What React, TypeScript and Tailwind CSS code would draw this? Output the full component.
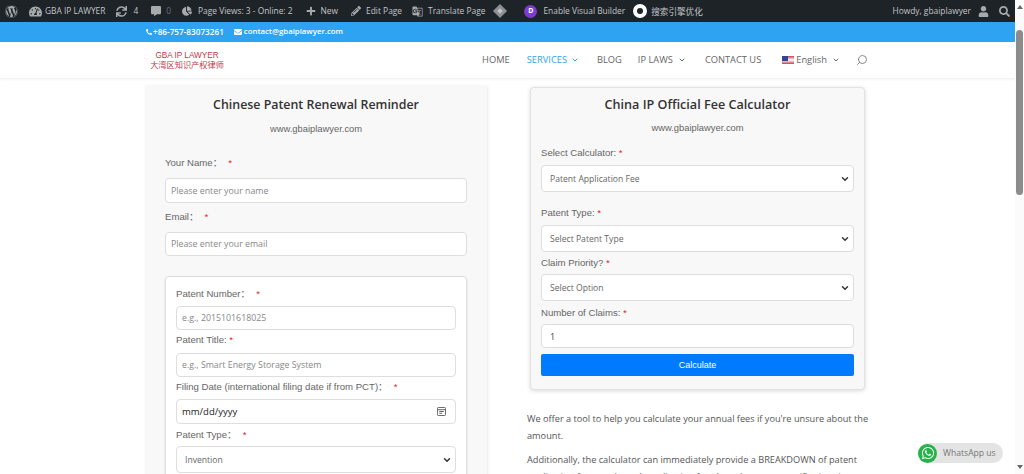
import { ChevronDown, Search } from 'lucide-react';
import { FaWhatsapp, FaWordpress, FaChartPie, FaTachometerAlt, FaSync, FaCommentAlt, FaPlus, FaPencilAlt, FaUser, FaSearch, FaPhoneAlt, FaEnvelope } from 'react-icons/fa';
import { MdGTranslate } from 'react-icons/md';

const Req = ({ gap = 'ml-[6px]' }: { gap?: string }) => <span className={`${gap} text-[#e02020]`}>*</span>;

const labelCls = "text-[9.6px] leading-[14px] text-[#666] font-['Liberation_Sans','Noto_Sans_CJK_SC',sans-serif]";

function Field({ label, placeholder, labelH = 'h-[18px]', h = 'h-[24px]' }: { label: React.ReactNode; placeholder: string; labelH?: string; h?: string }) {
  return (
    <div>
      <div className={`${labelH} ${labelCls}`}>{label}</div>
      <div className={`${h} flex items-center rounded border border-[#dedede] bg-white px-[5px] pt-[2px] text-[8.8px] text-[#888] font-['Open_Sans']`}>{placeholder}</div>
    </div>
  );
}

function SelectBox({ value }: { value: string }) {
  return (
    <div className="flex h-[27px] items-center justify-between rounded border border-[#dedede] bg-white pl-2 pr-[3px] text-[8.6px] text-[#666] font-['Open_Sans']">
      <span className="pt-[2px]">{value}</span>
      <ChevronDown className="h-[10px] w-[10px] text-[#333]" strokeWidth={3.5} />
    </div>
  );
}

export default function App() {
  return (
    <div className="flex h-[474px] w-[1024px] overflow-hidden bg-white font-['Open_Sans',sans-serif]">
      <div className="min-w-0 flex-1 overflow-hidden">
        {/* admin bar */}
        <div className="flex h-[22px] items-center bg-[#1d2327] pl-[5px] pr-[5px] text-[8.4px] text-[#c3c4c7]">
          <FaWordpress className="mr-[11px] h-[13px] w-[13px] text-[#a7aaad]" />
          <FaTachometerAlt className="mr-[3px] h-[13px] w-[13px] text-[#a7aaad]" />
          <span className="mr-[11px]">GBA IP LAWYER</span>
          <FaSync className="mr-[6px] h-[11px] w-[11px] text-[#a7aaad]" />
          <span className="mr-[13px]">4</span>
          <FaCommentAlt className="mr-[5px] h-[10px] w-[10px] text-[#a7aaad]" />
          <span className="mr-[11px] text-[#6b6f73]">0</span>
          <FaChartPie className="mr-[6px] h-[10px] w-[10px] text-[#a7aaad]" />
          <span className="mr-[13px]">Page Views: 3 - Online: 2</span>
          <FaPlus className="mr-[5px] h-[10px] w-[10px] text-[#a7aaad]" />
          <span className="mr-[13px]">New</span>
          <FaPencilAlt className="mr-[5px] h-[10px] w-[10px] text-[#a7aaad]" />
          <span className="mr-[10px]">Edit Page</span>
          <MdGTranslate className="mr-[5px] h-[11px] w-[11px] text-[#a7aaad]" />
          <span className="mr-[10px]">Translate Page</span>
          <div className="mr-[19px] flex h-[10px] w-[10px] rotate-45 items-center justify-center bg-[#8c8f94]">
            <div className="h-[4px] w-[4px] bg-[#c3c4c7]" />
          </div>
          <div className="mr-[6px] flex h-[13px] w-[13px] items-center justify-center rounded-full bg-[#7e3bd0] text-[7px] font-bold text-white">D</div>
          <span className="mr-[8px]">Enable Visual Builder</span>
          <div className="mr-[4px] flex h-[14px] w-[14px] items-center justify-center rounded-full bg-white">
            <div className="h-[6px] w-[6px] rounded-full bg-[#1d2327]" />
          </div>
          <span className="font-['Noto_Sans_CJK_SC'] text-[8.6px]">搜索引擎优化</span>
          <span className="ml-auto mr-[7px]">Howdy, gbaiplawyer</span>
          <FaUser className="mr-[10px] h-[11px] w-[11px] text-[#a7aaad]" />
          <FaSearch className="h-[11px] w-[11px] text-[#a7aaad]" />
        </div>

        {/* blue top strip */}
        <div className="flex h-5 items-center bg-[#2ea3f2] pl-[146px] text-[7.8px] font-semibold text-white">
          <FaPhoneAlt className="mr-[1px] h-[6px] w-[6px]" />
          <span className="mr-[10px] text-[8.2px]">+86-757-83073261</span>
          <FaEnvelope className="mr-[2px] h-[8px] w-[8px]" />
          <span>contact@gbaiplawyer.com</span>
        </div>

        {/* main nav */}
        <div className="flex h-[37px] items-center border-b border-[#f2f2f2] pl-[150px] pr-[147px] text-[9.3px] text-[#666] shadow-[0_1px_2px_rgba(0,0,0,0.04)]">
          <div className="w-[74px] pt-[1px] text-center text-[8.2px] leading-[10px] text-[#c0394a] font-['Liberation_Sans','Noto_Sans_CJK_SC',sans-serif]">
            <div>GBA IP LAWYER</div>
            <div>大湾区知识产权律师</div>
          </div>
          <nav className="ml-auto flex items-center font-medium">
            <span className="mr-[17px]">HOME</span>
            <span className="text-[#2ea3f2]">SERVICES</span>
            <ChevronDown className="ml-1 mr-[18px] h-[8px] w-[8px] text-[#2ea3f2]" strokeWidth={3} />
            <span className="mr-[16px]">BLOG</span>
            <span>IP LAWS</span>
            <ChevronDown className="ml-[5px] mr-[19px] h-[8px] w-[8px]" strokeWidth={3} />
            <span className="mr-[21px]">CONTACT US</span>
            <div className="mr-[2px] h-[8px] w-[12px] bg-[linear-gradient(180deg,#c8404f_0%,#fff_50%,#c8404f_100%)]">
              <div className="h-[5px] w-[6px] bg-[#33458f]" />
            </div>
            English
            <ChevronDown className="ml-[5px] mr-[16px] h-[8px] w-[8px]" strokeWidth={3} />
            <Search className="h-[12px] w-[12px] -scale-x-100" strokeWidth={1.5} />
          </nav>
        </div>

        <div className="flex items-start pl-[145px] pt-[7px] font-['Liberation_Sans',sans-serif]">
          {/* reminder form */}
          <div className="h-[420px] w-[342px] bg-[#f8f8f8] px-5 pt-[9px] shadow-[1px_0_3px_rgba(0,0,0,0.08)]">
            <h2 className="text-center text-[12.4px] font-semibold leading-[20px] text-[#333] font-['Open_Sans']">Chinese Patent Renewal Reminder</h2>
            <div className="mt-[7px] text-center text-[9.4px] leading-[14px] text-[#666]">www.gbaiplawyer.com</div>
            <div className="mt-[20px]">
              <Field labelH="h-[22px]" h="h-[25px]" label={<>Your Name：<Req /></>} placeholder="Please enter your name" />
              <div className="mt-[7px]">
                <Field labelH="h-[22px]" label={<>Email：<Req /></>} placeholder="Please enter your email" />
              </div>
            </div>
            <div className="mt-[20px] h-[300px] rounded border border-[#dedede] bg-white px-[10px] pt-[10px] shadow-[0_1px_3px_rgba(0,0,0,0.08)]">
              <Field labelH="h-[19px]" label={<>Patent Number：<Req /></>} placeholder="e.g., 2015101618025" />
              <div className="mt-[3px]">
                <Field labelH="h-[20px]" label={<>Patent Title: <Req gap="" /></>} placeholder="e.g., Smart Energy Storage System" />
              </div>
              <div className={`mt-[3px] h-[19px] ${labelCls}`}>Filing Date (international filing date if from PCT)：<Req /></div>
              <div className="flex h-[25px] items-center justify-between rounded border border-[#dedede] bg-white pl-[5px] pr-[9px] text-[9.5px] text-[#222] font-['Open_Sans']">
                <span className="pt-[2px]">mm/dd/yyyy</span>
                <svg viewBox="0 0 10 10" className="h-[9px] w-[9px] text-[#555]" fill="none" stroke="currentColor" strokeWidth="1">
                  <rect x="0.5" y="0.5" width="9" height="9" rx="1" />
                  <path d="M0.5 3h9M2.5 5h5M2.5 7h3" />
                </svg>
              </div>
              <div className={`mt-[4px] h-[18px] ${labelCls}`}>Patent Type：<Req /></div>
              <SelectBox value="Invention" />
            </div>
          </div>

          {/* calculator column */}
          <div className="ml-[40px] w-[343px]">
            <div className="ml-[3px] mt-[1px] h-[303px] w-[335px] rounded border border-[#e2e2e2] bg-[#f8f8f8] px-[10px] pt-[7px] shadow-[0_1px_4px_rgba(0,0,0,0.15)]">
              <h2 className="text-center text-[12.6px] font-semibold leading-[20px] text-[#333] font-['Open_Sans']">China IP Official Fee Calculator</h2>
              <div className="mt-[6px] text-center text-[9.4px] leading-[14px] text-[#666]">www.gbaiplawyer.com</div>
              <div className={`mt-[11px] h-[19px] ${labelCls}`}>Select Calculator: <Req gap="" /></div>
              <SelectBox value="Patent Application Fee" />
              <div className={`mt-[14px] h-[19px] ${labelCls}`}>Patent Type: <Req gap="" /></div>
              <SelectBox value="Select Patent Type" />
              <div className={`mt-[4px] h-[18px] ${labelCls}`}>Claim Priority? <Req gap="" /></div>
              <SelectBox value="Select Option" />
              <div className={`mt-[5px] h-[18px] ${labelCls}`}>Number of Claims: <Req gap="" /></div>
              <div className="flex h-[24px] items-center rounded border border-[#dedede] bg-white pl-2 pt-[2px] text-[9px] text-[#444] font-['Open_Sans']">1</div>
              <div className="mt-[6px] flex h-[22px] items-center justify-center rounded-[2px] bg-[#007bff] pt-[1px] text-[9px] text-white">Calculate</div>
            </div>
            <div className="mt-[20px] text-[9.2px] leading-[17px] text-[#555] font-['Open_Sans'] font-medium">
              <p>We offer a tool to help you calculate your annual fees if you're unsure about the amount.</p>
              <p className="mt-[7px]">Additionally, the calculator can immediately provide a BREAKDOWN of patent application fees, trademark application fees based on your specific situation.</p>
            </div>
          </div>
        </div>
      </div>

      {/* scrollbar */}
      <div className="relative flex w-[9px] flex-col items-center justify-between bg-[#fbfbfb] py-[5px]">
        <div className="h-0 w-0 border-x-[3px] border-b-[4px] border-x-transparent border-b-[#666]" />
        <div className="absolute left-[1px] top-[30px] h-[165px] w-[7px] rounded-sm bg-[#8c8c8c]" />
        <div className="h-0 w-0 border-x-[3px] border-t-[4px] border-x-transparent border-t-[#666]" />
      </div>

      {/* whatsapp badge */}
      <div className="absolute left-[918px] top-[443px] flex h-[20px] w-[85px] items-center rounded-full bg-[#e4e4e4] text-[8.6px] font-medium text-[#777]">
        <div className="flex h-[19px] w-[19px] items-center justify-center rounded-full bg-[#25b34a]">
          <FaWhatsapp className="h-[14px] w-[14px] text-white" />
        </div>
        <span className="ml-[6px]">WhatsApp us</span>
      </div>
    </div>
  );
}
